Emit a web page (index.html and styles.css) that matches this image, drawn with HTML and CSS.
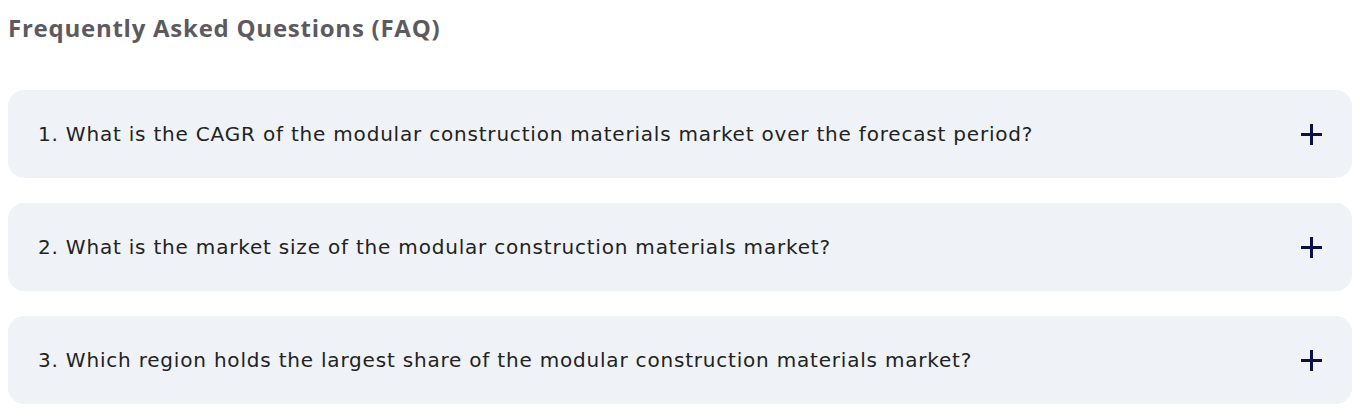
FILE: index.html
```html
<!DOCTYPE html>
<html>

<head>
    <meta charset="UTF-8">
    <meta name="viewport" content="width=device-width, initial-scale=1.0">
    <title>FAQ</title>
    <link rel="stylesheet" href="styles.css">
</head>

<body>
    <div class="faq">
        <h2 class="faq-title">Frequently Asked Questions (FAQ)</h2>

        <div class="faq-list">
            <div class="faq-item">
                <span class="faq-question">1. What is the CAGR of the modular construction materials market over the forecast period?</span>
                <span class="faq-toggle"></span>
            </div>
            <div class="faq-item">
                <span class="faq-question">2. What is the market size of the modular construction materials market?</span>
                <span class="faq-toggle"></span>
            </div>
            <div class="faq-item">
                <span class="faq-question">3. Which region holds the largest share of the modular construction materials market?</span>
                <span class="faq-toggle"></span>
            </div>
        </div>
    </div>
</body>

</html>
```

FILE: styles.css
```css
body {
    margin: 0;
    padding: 8px;
    background: #fff;
    font-family: "Open Sans", "DejaVu Sans", sans-serif;
}
.faq-title {
    margin: 3px 0 0;
    font-size: 24px;
    line-height: 34px;
    font-weight: 700;
    color: #5c5a5f;
    letter-spacing: 0.75px;
}
.faq-list {
    display: flex;
    flex-direction: column;
    gap: 25px;
    margin-top: 45px;
}
.faq-item {
    display: flex;
    align-items: center;
    justify-content: space-between;
    height: 88px;
    padding: 0 30px;
    background: #eff2f7;
    border-radius: 16px;
    box-sizing: border-box;
}
.faq-question {
    font-family: "DejaVu Sans", sans-serif;
    font-size: 20px;
    letter-spacing: 0.8px;
    color: #222;
}
.faq-toggle {
    position: relative;
    width: 21px;
    height: 21px;
}
.faq-toggle::before,
.faq-toggle::after {
    content: "";
    position: absolute;
    background: #0b1146;
}
.faq-toggle::before {
    left: 0;
    right: 0;
    top: 9px;
    height: 3px;
}
.faq-toggle::after {
    top: 0;
    bottom: 0;
    left: 9px;
    width: 3px;
}
```
